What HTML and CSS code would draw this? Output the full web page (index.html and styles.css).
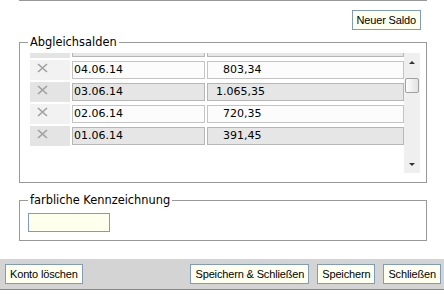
FILE: index.html
```html
<!DOCTYPE html>
<html lang="de">
<head>
    <meta charset="UTF-8">
    <title>Konto</title>
    <link rel="stylesheet" href="styles.css">
</head>
<body>
    <div class="top-rule"></div>

    <div class="toolbar">
        <button class="btn">Neuer Saldo</button>
    </div>

    <fieldset class="group balances">
        <legend>Abgleichsalden</legend>
        <div class="scroll-box">
            <div class="rows">
                <div class="rows-inner">
                    <!-- row scrolled mostly out of view -->
                    <div class="row alt">
                        <div class="del"></div>
                        <div class="field"></div>
                        <div class="field"></div>
                    </div>
                    <div class="row">
                        <div class="del"><svg width="11" height="10" viewBox="0 0 11 10"><path d="M1 1 L10 9 M10 1 L1 9" stroke="#a0a0a0" stroke-width="1.6" fill="none"/></svg></div>
                        <div class="field">04.06.14</div>
                        <div class="field">    803,34</div>
                    </div>
                    <div class="row alt">
                        <div class="del"><svg width="11" height="10" viewBox="0 0 11 10"><path d="M1 1 L10 9 M10 1 L1 9" stroke="#a0a0a0" stroke-width="1.6" fill="none"/></svg></div>
                        <div class="field">03.06.14</div>
                        <div class="field">  1.065,35</div>
                    </div>
                    <div class="row">
                        <div class="del"><svg width="11" height="10" viewBox="0 0 11 10"><path d="M1 1 L10 9 M10 1 L1 9" stroke="#a0a0a0" stroke-width="1.6" fill="none"/></svg></div>
                        <div class="field">02.06.14</div>
                        <div class="field">    720,35</div>
                    </div>
                    <div class="row alt">
                        <div class="del"><svg width="11" height="10" viewBox="0 0 11 10"><path d="M1 1 L10 9 M10 1 L1 9" stroke="#a0a0a0" stroke-width="1.6" fill="none"/></svg></div>
                        <div class="field">01.06.14</div>
                        <div class="field">    391,45</div>
                    </div>
                </div>
            </div>
            <div class="scrollbar">
                <span class="arrow up"></span>
                <span class="thumb"></span>
                <span class="arrow down"></span>
            </div>
        </div>
    </fieldset>

    <fieldset class="group colour">
        <legend>farbliche Kennzeichnung</legend>
        <div class="swatch"></div>
    </fieldset>

    <div class="footer">
        <button class="btn">Konto löschen</button>
        <div class="actions">
            <button class="btn">Speichern &amp; Schließen</button>
            <button class="btn">Speichern</button>
            <button class="btn">Schließen</button>
        </div>
    </div>
</body>
</html>
```

FILE: styles.css
```css
/* Global */
body {
    margin: 0;
    font-family: "DejaVu Sans", Verdana, sans-serif;
    font-size: 11px;
    color: #000;
    background: #fff;
}

.top-rule {
    height: 0;
    border-top: 1px solid #999;
    margin: 0 17px 0 19px;
}

.toolbar {
    display: flex;
    justify-content: flex-end;
    padding: 9px 23px 0 0;
}

.btn {
    font-family: "Liberation Sans", Arial, sans-serif;
    font-size: 11px;
    letter-spacing: -0.15px;
    height: 20px;
    padding: 0 4px;
    line-height: 18px;
    color: #000;
    background: #fffff0;
    border: 1px solid #7f9db9;
    border-radius: 0;
}

/* Fieldsets */
.group {
    margin: 0 17px 0 19px;
    border: 1px solid #999;
    min-width: 0;
}

    .group legend {
        padding: 0 2px;
        font-size: 11.4px;
        line-height: 13px;
    }

.balances {
    margin-top: 6px;
    padding: 4px 6px 9px 8px;
}

.scroll-box {
    display: flex;
    height: 120px;
    margin-left: 2px;
}

.rows {
    width: 374px;
    overflow: hidden;
}

.rows-inner {
    display: grid;
    row-gap: 2px;
    margin-top: -15px;
}

.row {
    display: grid;
    grid-template-columns: 40px 133px 197px;
    column-gap: 2px;
    height: 20px;
}

.del {
    background: #f2f2f2;
}

    .del svg {
        display: block;
        margin: 3px 0 0 7px;
    }

.field {
    box-sizing: border-box;
    height: 18px;
    margin-top: 1px;
    padding: 0 1px;
    line-height: 16px;
    white-space: pre;
    background: #fcfcfc;
    border: 1px solid #c4c4c4;
}

.alt .del {
    background: #e4e4e4;
}

.alt .field {
    background: #e6e6e6;
    border-color: #b6b6b6;
}

/* Scrollbar */
.scrollbar {
    width: 16px;
    background: #efefef;
    display: flex;
    flex-direction: column;
    align-items: center;
    padding: 8px 0 7px;
    box-sizing: border-box;
}

.arrow {
    width: 0;
    height: 0;
    border-left: 3px solid transparent;
    border-right: 3px solid transparent;
}

    .arrow.up {
        border-bottom: 3px solid #333;
    }

    .arrow.down {
        margin-top: auto;
        border-top: 3px solid #333;
    }

.thumb {
    box-sizing: border-box;
    width: 14px;
    height: 15px;
    margin-top: 14px;
    border: 1px solid #a0a0a0;
    border-radius: 2px;
    background: linear-gradient(to right, #fdfdfd, #e2e2e2);
}

.colour {
    margin-top: 11px;
    padding: 6px 8px 8px 8px;
}

.swatch {
    box-sizing: border-box;
    width: 82px;
    height: 19px;
    border: 1px solid #7f9db9;
    background: #ffffee;
}

/* Footer */
.footer {
    margin-top: 18px;
    display: flex;
    justify-content: space-between;
    padding: 5px 3px 5px 5px;
    background: #d4d4d4;
    border-bottom: 1px solid #888;
}

.actions {
    display: flex;
    gap: 8px;
}
```
